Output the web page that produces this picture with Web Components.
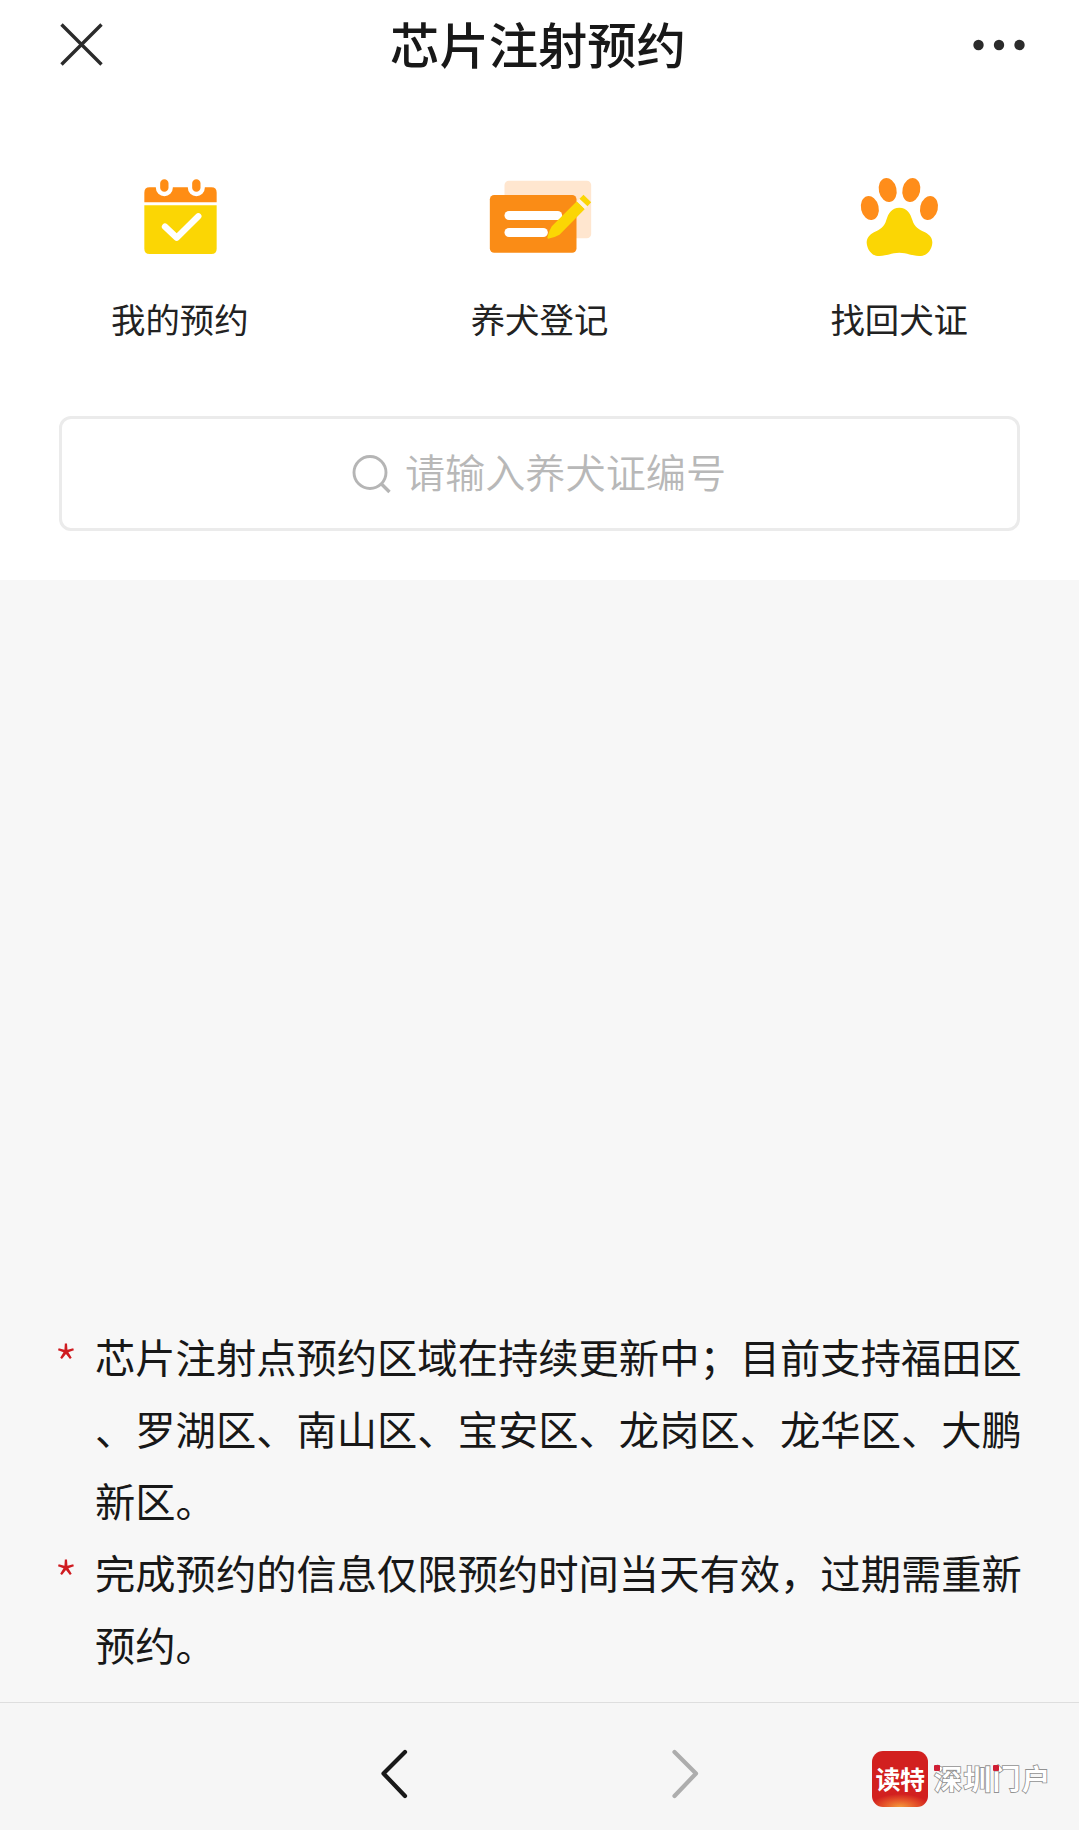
<!DOCTYPE html>
<html lang="zh-CN">
<head>
<meta charset="utf-8">
<title>芯片注射预约</title>
<style>
html,body{margin:0;padding:0}
body{background:#f7f7f7;font-family:"Noto Sans CJK SC",sans-serif;color:#1a1a1a}
</style>
</head>
<body>
<chip-page></chip-page>
<script>
const define=(name,html)=>customElements.define(name,class extends HTMLElement{
  constructor(){super();this.attachShadow({mode:'open'}).innerHTML=html;}
});

define('page-header',`
<style>
:host{display:flex;height:90px;align-items:center;justify-content:space-between;padding:0 54px 0 55px;box-sizing:border-box}
svg{display:block}
h1{margin:-5px 4px 0 0;font-size:49.3px;line-height:90px;font-weight:500;color:#181818}
</style>
<svg width="52" height="52" viewBox="0 0 52 52" fill="none" stroke="#2b2b2b" stroke-width="3.4"><path d="M6.500 5.500L46.500 45.500M46.500 5.500L6.500 45.500"/></svg>
<h1><slot></slot></h1>
<svg width="52" height="52" viewBox="0 0 52 52" fill="#2b2b2b"><circle cx="5.500" cy="26" r="5.200"/><circle cx="26" cy="26" r="5.200"/><circle cx="46.500" cy="26" r="5.200"/></svg>`);

define('nav-entry',`
<style>
:host{display:flex;flex:1;flex-direction:column;align-items:center}
::slotted(*){display:block}
.label{font-size:34.4px;line-height:50px;margin-top:30px;color:#222}
</style>
<slot name="icon"></slot><div class="label"><slot></slot></div>`);

define('calendar-icon',`
<style>:host,svg{display:block;width:120px;height:90px}</style>
<svg viewBox="90 39 360 270">
<path d="M163 127V98Q163 82 179 82H364Q380 82 380 98V127Z" fill="#ff8d14"/>
<path d="M163 136H380V266Q380 282 364 282H179Q163 282 163 266Z" fill="#fbd604"/>
<g fill="none" stroke-linecap="round"><path d="M223 70V83M319 70V83" stroke="#fff" stroke-width="51"/><path d="M223 70V83M319 70V83" stroke="#ff8d14" stroke-width="25"/>
<path d="M225 200L260 233L325 169" stroke="#fff" stroke-width="19" stroke-linejoin="round"/></g>
</svg>`);

define('form-icon',`
<style>:host,svg{display:block;width:120px;height:90px}</style>
<svg viewBox="88.500 39 360 270">
<rect x="162" y="62" width="260" height="173" rx="13" fill="#ffe6cf"/>
<rect x="118" y="105" width="260" height="173" rx="13" fill="#fa8c16"/>
<rect x="162" y="153" width="173" height="27" rx="13.500" fill="#fff"/>
<rect x="162" y="204" width="130" height="27" rx="13.500" fill="#fff"/>
<path d="M379 124L403 147L327 224Q309 234 293 236Q289 234 291 230Q295 213 304 199Z" fill="#fbd604"/>
<path d="M379 124L387 116L411 139L403 147Z" fill="#fff3df"/>
<path d="M387 116L399 104L422 127L411 139Z" fill="#fbd604"/>
</svg>`);

define('paw-icon',`
<style>:host,svg{display:block;width:120px;height:90px}</style>
<svg viewBox="117 39 360 270">
<g fill="#ff8d1a"><ellipse cx="209.500" cy="144" rx="26.500" ry="36.500" transform="rotate(-13 209.500 144)"/><ellipse cx="263" cy="90" rx="26.500" ry="36.500" transform="rotate(-13 263 90)"/><ellipse cx="334" cy="90" rx="26.500" ry="36.500" transform="rotate(13 334 90)"/><ellipse cx="387" cy="144" rx="26.500" ry="36.500" transform="rotate(13 387 144)"/></g>
<path d="M298 143C321 143 331 160 337 180C343 201 357 209 375 217C390 225 397 235 397 248C396 268 382 284 368 287C341 291 325 278 298 278C271 278 255 291 228 287C214 284 201 267 200 248C200 235 208 224 222 217C240 209 253 201 259 180C265 160 275 143 298 143Z" fill="#fbd604"/>
</svg>`);

define('search-box',`
<style>
:host{display:flex;height:115px;box-sizing:border-box;margin:0 59px;border:3px solid #ebebeb;border-radius:12px;align-items:center;justify-content:center;gap:13px;color:#b8b8b8;font-size:40.15px;line-height:58px;font-weight:350}
svg{display:block;margin-top:1px}
span{margin:-5px 1px 0 0}
</style>
<svg width="40" height="40" viewBox="0 0 40 40" fill="none" stroke="#b5b5b5" stroke-width="2.900"><circle cx="18" cy="18.500" r="16"/><path d="M29.500 30L37.500 38" stroke-width="3.400"/></svg>
<span><slot></slot></span>`);

define('notice-item',`
<style>
:host{display:flex;font-size:40.3px;line-height:72px;color:#181818}
.star{width:41px;margin:7px 0 0 -3px;flex:none;color:#cf1b20;font-size:54px;font-weight:300}
::slotted(span){display:block;white-space:nowrap}
</style>
<div class="star">*</div><div><slot></slot></div>`);

define('dute-mark',`
<style>
:host{display:flex;align-items:center;gap:6px}
.badge{width:56px;height:56px;border-radius:11px;background:radial-gradient(ellipse 30px 13px at 50% 100%,#f49a3c,#e5542a 55%,transparent 100%),#d2201f;color:#fff;font-size:25px;line-height:54px;font-weight:700;text-align:center;letter-spacing:-.5px;white-space:nowrap}
.name{position:relative;font-size:28px;line-height:54px;height:56px;font-weight:700;letter-spacing:1.300px;color:#fff;-webkit-text-stroke:1.700px #929292;paint-order:stroke fill;white-space:nowrap}
i{position:absolute;top:14px;width:6px;height:6px;background:#cf1f35;border-radius:1px}
</style>
<div class="badge">读特</div><div class="name">深圳门户<i style="left:0"></i><i style="left:59px"></i></div>`);

define('bottom-bar',`
<style>
:host{display:grid;grid-template-columns:365px 1fr 365px;box-sizing:border-box;height:128px;border-top:1.5px solid #dedede;background:#f6f6f6}
.arrows{grid-column:2;display:flex;justify-content:space-between;padding:43px 13px 0}
svg{display:block}
dute-mark{justify-self:start;align-self:start;margin:48px 0 0 158px}
</style>
<div class="arrows">
<svg width="32" height="56" viewBox="0 0 32 56" fill="none" stroke="#191919" stroke-width="4.200" stroke-linecap="round" stroke-linejoin="round"><path d="M27 6L5.500 27.500L27 50"/></svg>
<svg width="32" height="56" viewBox="0 0 32 56" fill="none" stroke="#adadad" stroke-width="4.200" stroke-linecap="round" stroke-linejoin="round"><path d="M5.500 6L27 27.500L5.500 50"/></svg>
</div><dute-mark></dute-mark>`);

define('chip-page',`
<style>
:host{display:flex;flex-direction:column;height:1830px;width:1079px;overflow:hidden}
.top{height:580px;background:#fff}
nav{display:flex;padding-top:83px;height:243px}
main{flex:1;display:flex;flex-direction:column;justify-content:flex-end;padding:0 0 22px 57px}
</style>
<div class="top">
<page-header>芯片注射预约</page-header>
<nav>
<nav-entry><calendar-icon slot="icon"></calendar-icon>我的预约</nav-entry>
<nav-entry><form-icon slot="icon"></form-icon>养犬登记</nav-entry>
<nav-entry><paw-icon slot="icon"></paw-icon>找回犬证</nav-entry>
</nav>
<search-box>请输入养犬证编号</search-box>
</div>
<main>
<notice-item><span>芯片注射点预约区域在持续更新中；目前支持福田区</span><span>、罗湖区、南山区、宝安区、龙岗区、龙华区、大鹏</span><span>新区。</span></notice-item>
<notice-item><span>完成预约的信息仅限预约时间当天有效，过期需重新</span><span>预约。</span></notice-item>
</main>
<bottom-bar></bottom-bar>`);
</script>
</body>
</html>
